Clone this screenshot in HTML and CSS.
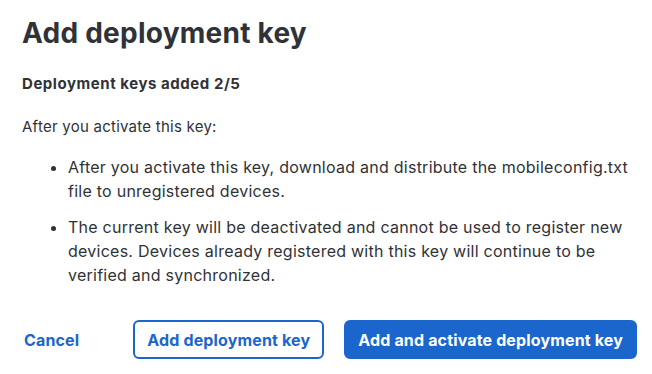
FILE: index.html
```html
<!DOCTYPE html>
<html lang="en">
<head>
    <meta charset="UTF-8">
    <meta name="viewport" content="width=device-width, initial-scale=1.0">
    <title>Add deployment key</title>
    <link rel="stylesheet" href="styles.css">
</head>
<body>
    <div class="dialog">
        <h1 class="dialog-title">Add deployment key</h1>
        <p class="key-count">Deployment keys added 2/5</p>
        <p class="intro">After you activate this key:</p>
        <ul class="notes">
            <li>After you activate this key, download and distribute the mobileconfig.txt file to unregistered devices.</li>
            <li>The current key will be deactivated and cannot be used to register new devices. Devices already registered with this key will continue to be verified and synchronized.</li>
        </ul>
        <div class="actions">
            <button class="btn btn-link">Cancel</button>
            <button class="btn btn-outline">Add deployment key</button>
            <button class="btn btn-primary">Add and activate deployment key</button>
        </div>
    </div>
</body>
</html>
```

FILE: styles.css
```css
body {
    margin: 0;
    background-color: #ffffff;
    font-family: Inter, "Noto Sans", sans-serif;
    color: #2f3237;
}

.dialog {
    padding: 16px 22px 0 22px;
}

.dialog-title {
    margin: 0;
    font-size: 28px;
    line-height: 34px;
    font-weight: 700;
    letter-spacing: 0.25px;
}

.key-count {
    margin: 24px 0 0;
    font-size: 15px;
    line-height: 20px;
    font-weight: 700;
    letter-spacing: 0.55px;
}

.intro {
    margin: 23px 0 0;
    font-size: 15px;
    line-height: 20px;
    letter-spacing: 0.25px;
}

.notes {
    margin: 18px 0 0;
    padding-left: 46px;
    font-size: 16px;
    line-height: 24px;
    letter-spacing: 0.25px;
}

.notes li + li {
    margin-top: 12px;
}

.actions {
    display: flex;
    align-items: center;
    margin-top: 33px;
}

.btn {
    flex-shrink: 0;
    white-space: nowrap;
    font-family: Inter, "Noto Sans", sans-serif;
    font-size: 16px;
    font-weight: 700;
    letter-spacing: 0.15px;
    height: 39px;
    border-radius: 6px;
    padding: 0 12px;
    cursor: pointer;
}

.btn-link {
    background: none;
    border: none;
    color: #1a66cc;
    padding: 0 2px;
    margin-right: 52px;
}

.btn-outline {
    background-color: #ffffff;
    border: 2px solid #1a66cc;
    color: #1a66cc;
    margin-right: 20px;
}

.btn-primary {
    background-color: #1a66cc;
    border: 2px solid #1a66cc;
    color: #ffffff;
}
```
